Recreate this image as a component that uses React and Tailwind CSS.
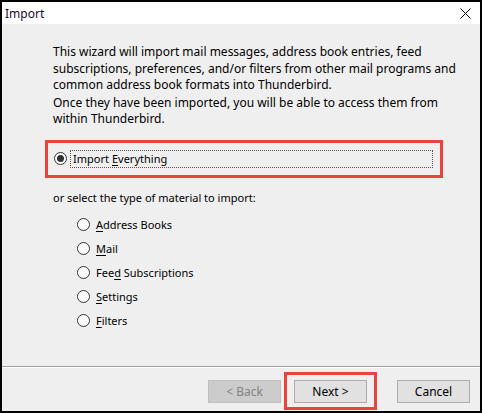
import React from "react";

const font = { fontFamily: '"Noto Sans", "Open Sans", sans-serif' };

const Radio = ({ checked }) => (
  <span className="flex items-center justify-center w-[13px] h-[13px] rounded-full border border-[#333333] bg-white shrink-0">
    {checked && <span className="w-[7px] h-[7px] rounded-full bg-[#333333]"></span>}
  </span>
);

const Option = ({ pre, key_, post }) => (
  <div className="flex items-center h-[24px] pl-[75px]">
    <Radio />
    <span className="ml-[6px] text-black text-[11px]">
      {pre}
      <span className="underline underline-offset-2">{key_}</span>
      {post}
    </span>
  </div>
);

const ImportWizard = () => {
  const options = [
    { pre: "", key_: "A", post: "ddress Books" },
    { pre: "", key_: "M", post: "ail" },
    { pre: "Fee", key_: "d", post: " Subscriptions" },
    { pre: "", key_: "S", post: "ettings" },
    { pre: "", key_: "F", post: "ilters" },
  ];

  return (
    <div
      className="w-[482px] h-[413px] border-2 border-black bg-[#efefef] flex flex-col text-[12px] leading-[15px] text-black"
      style={font}
    >
      {/* Title bar */}
      <div className="h-[22px] bg-white flex items-center justify-between pl-[3px] pr-[9px]">
        <span className="text-[#1a0a2a]">Import</span>
        <svg width="11" height="11" viewBox="0 0 11 11">
          <path d="M0.5 0.5 L10.5 10.5 M10.5 0.5 L0.5 10.5" stroke="#000" strokeWidth="1" />
        </svg>
      </div>

      {/* Body */}
      <div className="flex-1 flex flex-col">
        <div className="pl-[51px] pt-[20px] leading-[16.5px]">
          <p>
            This wizard will import mail messages, address book entries, feed<br />
            subscriptions, preferences, and/or filters from other mail programs and<br />
            common address book formats into Thunderbird.
          </p>
          <p className="mt-[1px]">
            Once they have been imported, you will be able to access them from<br />
            within Thunderbird.
          </p>
        </div>

        <div className="mt-[12px] ml-[43px] w-[398px] h-[38px] border-[3px] border-[#e8443f] flex items-center pl-[6px]">
          <Radio checked />
          <div className="ml-[3px] w-[363px] h-[18px] border border-dotted border-[#555555] flex items-center pl-[2px] text-[11px]">
            Import <span className="underline underline-offset-2 ml-[3px]">E</span>verything
          </div>
        </div>

        <p className="mt-[12px] pl-[51px] text-[11px]">or select the type of material to import:</p>

        <div className="mt-[8px] flex flex-col">
          {options.map((o, i) => (
            <Option key={i} pre={o.pre} key_={o.key_} post={o.post} />
          ))}
        </div>

        {/* Footer */}
        <div className="mt-auto">
          <div className="h-px bg-[#a0a0a0]"></div>
          <div className="h-px bg-white"></div>
          <div className="flex items-center justify-end pt-[12px] pb-[8px] pr-[10px]">
            <button className="w-[73px] h-[23px] bg-[#cccccc] border border-[#bfbfbf] text-[#838383]">
              &lt; Back
            </button>
            <span className="relative ml-[13px]">
              <span className="absolute -left-[10px] -right-[10px] -top-[8px] -bottom-[7px] border-[3px] border-[#e8443f]"></span>
              <button className="relative w-[73px] h-[23px] bg-[#e1e1e1] border border-[#adadad]">
                Next &gt;
              </button>
            </span>
            <button className="ml-[30px] w-[73px] h-[23px] bg-[#e1e1e1] border border-[#adadad]">
              Cancel
            </button>
          </div>
        </div>
      </div>
    </div>
  );
};

export default function App() {
  return <ImportWizard />;
}
